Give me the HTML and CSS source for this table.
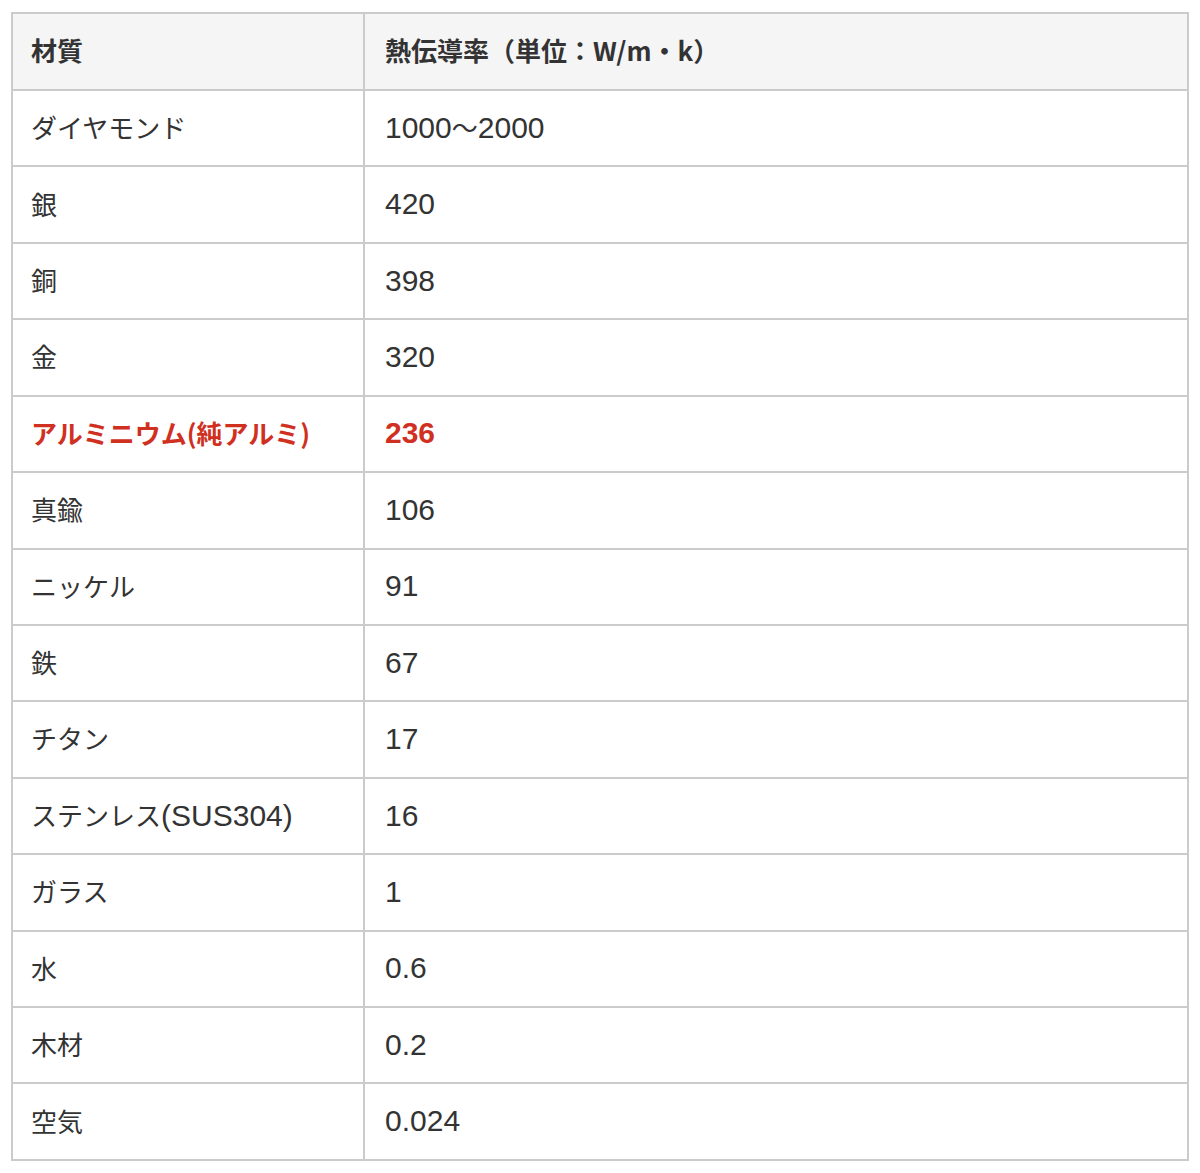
FILE: index.html
```html
<!DOCTYPE html>
<html lang="ja">
<head>
<meta charset="utf-8">
<link rel="stylesheet" href="styles.css">
</head>
<body>
<table class="tbl">
  <colgroup><col class="c1"><col class="c2"></colgroup>
  <thead>
    <tr><th>材質</th><th>熱伝導率（単位：W/m・k）</th></tr>
  </thead>
  <tbody>
    <tr><td>ダイヤモンド</td><td><span class="lat">1000</span>〜<span class="lat">2000</span></td></tr>
    <tr><td>銀</td><td><span class="lat">420</span></td></tr>
    <tr><td>銅</td><td><span class="lat">398</span></td></tr>
    <tr><td>金</td><td><span class="lat">320</span></td></tr>
    <tr class="hl"><td>アルミニウム(純アルミ)</td><td><span class="lat">236</span></td></tr>
    <tr><td>真鍮</td><td><span class="lat">106</span></td></tr>
    <tr><td>ニッケル</td><td><span class="lat">91</span></td></tr>
    <tr><td>鉄</td><td><span class="lat">67</span></td></tr>
    <tr><td>チタン</td><td><span class="lat">17</span></td></tr>
    <tr><td>ステンレス<span class="lat">(SUS304)</span></td><td><span class="lat">16</span></td></tr>
    <tr><td>ガラス</td><td><span class="lat">1</span></td></tr>
    <tr><td>水</td><td><span class="lat">0.6</span></td></tr>
    <tr><td>木材</td><td><span class="lat">0.2</span></td></tr>
    <tr><td>空気</td><td><span class="lat">0.024</span></td></tr>
  </tbody>
</table>
</body>
</html>
```
FILE: styles.css
```css
html, body { background: #fff; }
body {
  margin: 12px 11px 0 11px;
  font-family: "Noto Sans CJK JP", "Noto Sans", sans-serif;
  color: #333;
}
.tbl {
  border-collapse: collapse;
  width: 1176px;
  table-layout: fixed;
}
.c1 { width: 352px; }
.c2 { width: 824px; }
.tbl th, .tbl td {
  border: 2px solid #cbcbcb;
  text-align: left;
  padding: 0 0 3px 18px;
  font-size: 26px;
  line-height: 1.2;
  vertical-align: middle;
}
.tbl th + th, .tbl td + td { padding-left: 20px; }
.tbl th {
  background: #f5f5f5;
  font-weight: 700;
  height: 72px;
}
.tbl tbody tr { height: 76.43px; }
.tbl td { font-weight: 400; }
.lat {
  font-family: "Liberation Sans", "Noto Sans CJK JP", sans-serif;
  font-size: 30px;
  line-height: 1;
}
.hl td { color: #d0301f; font-weight: 700; }
```
